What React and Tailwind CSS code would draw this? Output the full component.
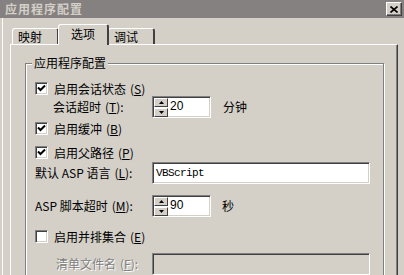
import React from 'react';

const cjk = { fontFamily: '"Noto Sans CJK SC", "Liberation Sans", sans-serif' };

const Check = ({ checked }) => (
  <div className="w-[13px] h-[13px] shrink-0 bg-white border border-t-[#808080] border-l-[#808080] border-b-white border-r-white shadow-[inset_1px_1px_0_#404040,inset_-1px_-1px_0_#d4d0c8] flex items-center justify-center">
    {checked && (
      <svg width="9" height="9" viewBox="0 0 9 9">
        <path d="M1 3.5 L3.5 6 L8 1.5" fill="none" stroke="#000" strokeWidth="2" />
      </svg>
    )}
  </div>
);

const Sunken = ({ className, children }) => (
  <div className={`border border-t-[#808080] border-l-[#808080] border-b-white border-r-white shadow-[inset_1px_1px_0_#404040,inset_-1px_-1px_0_#d4d0c8] ${className}`}>
    {children}
  </div>
);

const SpinBtn = ({ up }) => (
  <div className="w-[14px] h-[9px] bg-[#d4d0c8] border border-t-white border-l-white border-b-[#404040] border-r-[#404040] flex items-center justify-center">
    <svg width="5" height="3" viewBox="0 0 5 3">
      {up ? <path d="M2.5 0 L5 3 L0 3 Z" fill="#000" /> : <path d="M0 0 L5 0 L2.5 3 Z" fill="#000" />}
    </svg>
  </div>
);

const Spinner = ({ value }) => (
  <Sunken className="w-[59px] h-[22px] bg-white flex items-center pl-[1px]">
    <div className="flex flex-col gap-[1px]">
      <SpinBtn up />
      <SpinBtn />
    </div>
    <span className="ml-[2px] text-[12px] leading-none text-black -mt-[3px]" style={{ fontFamily: '"Liberation Sans", sans-serif' }}>{value}</span>
  </Sunken>
);

const Acc = ({ k }) => (
  <span className="ml-[4px]">(<u>{k}</u>)</span>
);

const CheckRow = ({ checked, label, k, className }) => (
  <div className={`flex items-center h-[13px] ${className}`}>
    <Check checked={checked} />
    <span className="ml-[6px] text-[12px] leading-none text-black whitespace-nowrap">
      {label}<Acc k={k} />
    </span>
  </div>
);

const Tab = ({ label, active }) =>
  active ? (
    <div className="relative z-10 -mb-[1px] h-[21px] w-[51px] -mx-[1px] bg-[#d4d0c8] border-l border-t border-white border-r-2 border-r-[#404040] rounded-t-[3px] flex justify-center pt-[2px] text-[12px] leading-[14px]">
      {label}
    </div>
  ) : (
    <div className="h-[16px] w-[47px] bg-[#d4d0c8] border-l border-t border-white border-r-2 border-r-[#404040] rounded-t-[3px] pl-[5px] pt-[1px] text-[12px] leading-[14px]">
      {label}
    </div>
  );

export default function App() {
  return (
    <div className="w-[404px] h-[275px] overflow-hidden bg-[#d4d0c8] text-black" style={cjk}>
      <div className="h-[18px] bg-[#858181] flex items-center justify-between pl-[5px] pr-[2px]">
        <span className="text-[12px] font-bold tracking-[1px] text-[#d4d0c8] leading-none">应用程序配置</span>
        <div className="w-[16px] h-[14px] bg-[#d4d0c8] border border-t-white border-l-white border-b-[#404040] border-r-[#404040] shadow-[inset_-1px_-1px_0_#808080] flex items-center justify-center">
          <svg width="8" height="7" viewBox="0 0 8 7">
            <path d="M0.5 0.5 L7.5 6.5 M7.5 0.5 L0.5 6.5" stroke="#000" strokeWidth="1.6" />
          </svg>
        </div>
      </div>

      <div className="border-l border-white ml-[2px] pl-[7px] pt-[7px]">
        <div className="flex items-end h-[19px] pl-[2px]">
          <Tab label="映射" />
          <Tab label="选项" active />
          <Tab label="调试" />
        </div>

        <div className="w-[388px] h-[240px] border-l border-t border-white border-r border-r-[#404040] shadow-[inset_-1px_0_0_#808080] pl-[14px] pt-[18px]">
          <div className="relative w-[359px] h-[230px] border border-[#808080] shadow-[inset_1px_1px_0_#fff,1px_1px_0_#fff] pl-[9px]">
            <span className="absolute -top-[8px] left-[6px] px-[2px] bg-[#d4d0c8] text-[12px] leading-[14px]">应用程序配置</span>

            <CheckRow checked label="启用会话状态" k="S" className="mt-[18px]" />

            <div className="flex items-center h-[22px] mt-[1px]">
              <span className="w-[117px] pl-[18px] text-[12px] leading-none whitespace-nowrap">会话超时<Acc k="T" />:</span>
              <Spinner value="20" />
              <span className="ml-[12px] text-[12px] leading-none">分钟</span>
            </div>

            <CheckRow checked label="启用缓冲" k="B" className="mt-[4px]" />
            <CheckRow checked label="启用父路径" k="P" className="mt-[11px]" />

            <div className="flex items-center h-[22px] mt-[3px]">
              <span className="w-[117px] text-[12px] leading-none whitespace-nowrap">默认 ASP 语言<Acc k="L" />:</span>
              <Sunken className="w-[218px] h-[22px] bg-white flex items-center pl-[3px]">
                <span className="text-[11px] tracking-[-0.6px] leading-none" style={{ fontFamily: '"Liberation Mono", monospace' }}>VBScript</span>
              </Sunken>
            </div>

            <div className="flex items-center h-[22px] mt-[11px]">
              <span className="w-[117px] text-[12px] leading-none whitespace-nowrap">ASP 脚本超时<Acc k="M" />:</span>
              <Spinner value="90" />
              <span className="ml-[11px] text-[12px] leading-none">秒</span>
            </div>

            <CheckRow label="启用并排集合" k="E" className="mt-[13px]" />

            <div className="flex items-center h-[22px] mt-[10px]">
              <span className="w-[117px] pl-[21px] text-[12px] leading-none whitespace-nowrap text-[#808080] [text-shadow:1px_1px_0_#fff]">清单文件名<Acc k="F" />:</span>
              <Sunken className="w-[218px] h-[22px] bg-[#d4d0c8]" />
            </div>
          </div>
        </div>
      </div>
    </div>
  );
}
